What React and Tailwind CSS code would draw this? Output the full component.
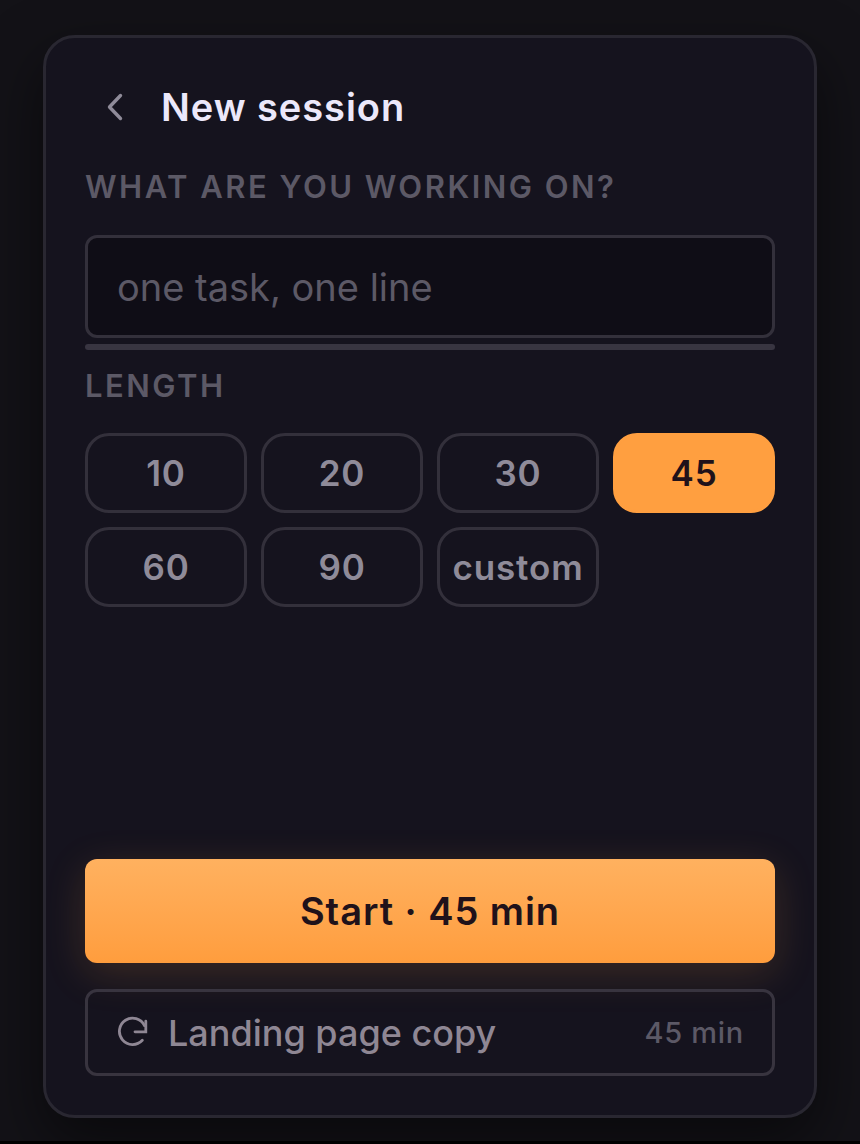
import { useState } from 'react';

const LENGTHS = ['10', '20', '30', '45', '60', '90', 'custom'];

const LABEL = 'text-[31px] leading-12 font-semibold tracking-[0.08em] text-[#5c5966] uppercase';

const CHIP_BASE = 'h-20 rounded-3xl border-3 text-[35px] font-semibold tracking-wide';

function BackIcon() {
  return (
    <svg className="h-8 w-5" viewBox="0 0 20 32" fill="none" stroke="currentColor" strokeWidth="3.4" strokeLinecap="round" strokeLinejoin="round">
      <path d="M15.5 4.5 4.5 16l11 11.5" />
    </svg>
  );
}

function RepeatIcon() {
  return (
    <svg className="h-8 w-8 shrink-0 overflow-visible" viewBox="0 0 32 32" fill="none" stroke="currentColor" strokeWidth="2.8" strokeLinecap="round">
      <path d="M26.3 23.3A13.2 13.2 0 1 1 28.5 8.6" />
      <path d="M29.8 4.2v10.6H19" />
    </svg>
  );
}

export default function App() {
  const [task, setTask] = useState('');
  const [length, setLength] = useState('45');

  return (
    <div className="flex min-h-screen flex-col border-b-3 border-black bg-[#131217] px-[43px] pt-[35px] pb-[23px] font-['Inter',sans-serif]">
      <main className="flex grow flex-col rounded-[32px] border-3 border-[#292731] bg-[#15131e] px-[39px] pt-[37px] pb-[39px] shadow-[0_24px_60px_rgba(0,0,0,0.5)]">
        {/* Header */}
        <header className="flex h-16 items-center gap-9">
          <button type="button" aria-label="Back" className="ml-5 text-[#8f8b99]">
            <BackIcon />
          </button>
          <h1 className="text-[38px] font-semibold tracking-wide text-[#ece8fa]">New session</h1>
        </header>

        {/* Task */}
        <label htmlFor="task" className={`mt-6 ${LABEL}`}>
          What are you working on?
        </label>
        <input
          id="task"
          type="text"
          value={task}
          onChange={(e) => setTask(e.target.value)}
          placeholder="one task, one line"
          className="mt-6 h-[103px] w-full rounded-xl border-3 border-[#33303b] bg-[#0f0d16] px-[29px] text-[38px] text-[#ece8fa] outline-none placeholder:text-[#5c5966]"
        />
        <div className="mt-1.5 h-1.5 rounded-full bg-[#383541]" />

        {/* Length */}
        <h2 id="length" className={`mt-3 ${LABEL}`}>
          Length
        </h2>
        <div role="group" aria-labelledby="length" className="mt-[23px] grid grid-cols-4 gap-3.5">
          {LENGTHS.map((item) => (
            <button
              key={item}
              type="button"
              aria-pressed={item === length}
              onClick={() => setLength(item)}
              className={`${CHIP_BASE} ${
                item === length
                  ? 'border-[#ff9f40] bg-[#ff9f40] text-[#20121a]'
                  : 'border-[#33303b] text-[#8f8b99]'
              }`}
            >
              {item}
            </button>
          ))}
        </div>

        {/* Actions */}
        <div className="mt-auto flex flex-col gap-[26px]">
          <button
            type="button"
            className="h-[104px] rounded-xl bg-linear-to-b from-[#ffb15f] to-[#ff9d3d] text-[38px] font-semibold tracking-wide text-[#20121a] shadow-[0_10px_40px_rgba(255,159,64,0.17)]"
          >
            Start · {length} min
          </button>
          <button
            type="button"
            className="flex h-[87px] items-center gap-5 rounded-xl border-3 border-[#38343f] px-7 text-[#8f8794]"
          >
            <RepeatIcon />
            <span className="grow text-left text-[36px] font-medium">Landing page copy</span>
            <span className="text-[29px] font-medium tracking-wide text-[#5c5966]">45 min</span>
          </button>
        </div>
      </main>
    </div>
  );
}
